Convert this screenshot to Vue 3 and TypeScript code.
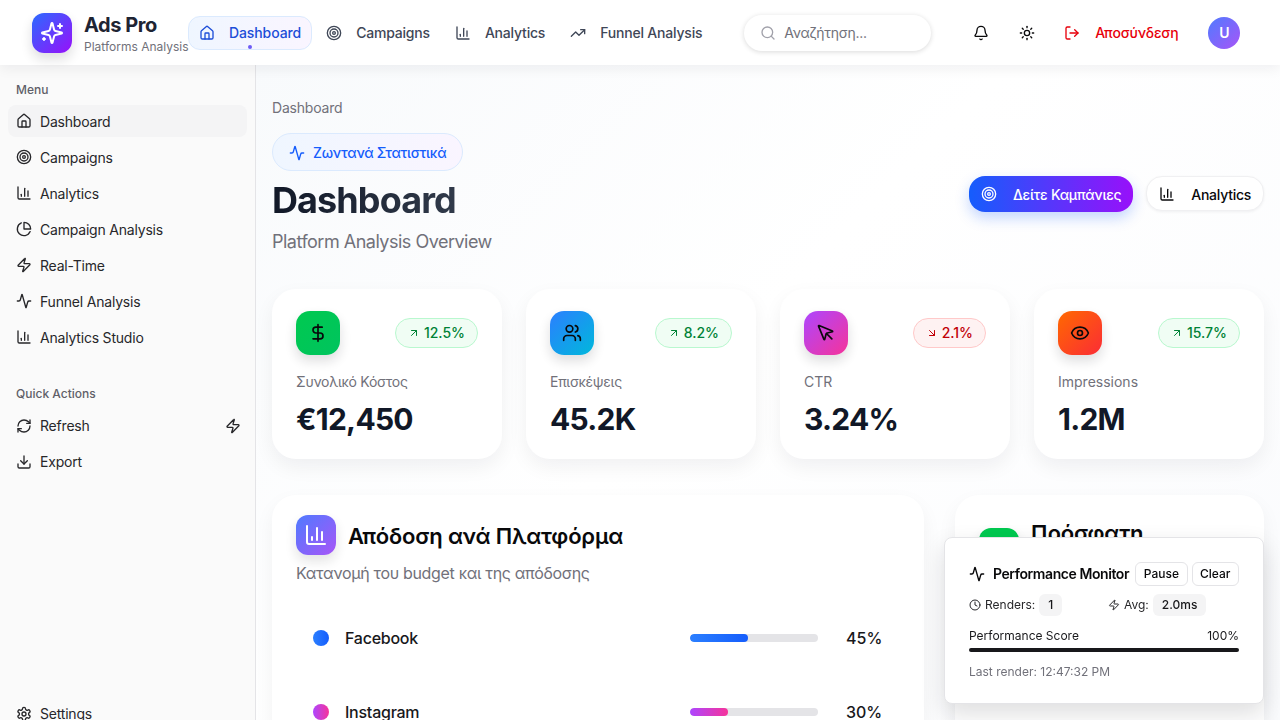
<script setup lang="ts">
const icons: Record<string, string> = {
  home: '<path d="M15 21v-8a1 1 0 0 0-1-1h-4a1 1 0 0 0-1 1v8"/><path d="M3 10a2 2 0 0 1 .709-1.528l7-5.999a2 2 0 0 1 2.582 0l7 5.999A2 2 0 0 1 21 10v9a2 2 0 0 1-2 2H5a2 2 0 0 1-2-2z"/>',
  target: '<circle cx="12" cy="12" r="10"/><circle cx="12" cy="12" r="6"/><circle cx="12" cy="12" r="2"/>',
  chart: '<path d="M3 3v16a2 2 0 0 0 2 2h16"/><path d="M18 17V9"/><path d="M13 17V5"/><path d="M8 17v-3"/>',
  pie: '<path d="M21.21 15.89A10 10 0 1 1 8 2.83"/><path d="M22 12A10 10 0 0 0 12 2v10z"/>',
  zap: '<path d="M4 14a1 1 0 0 1-.78-1.63l9.9-10.2a.5.5 0 0 1 .86.46l-1.92 6.02A1 1 0 0 0 13 10h7a1 1 0 0 1 .78 1.63l-9.9 10.2a.5.5 0 0 1-.86-.46l1.92-6.02A1 1 0 0 0 11 14z"/>',
  activity: '<path d="M22 12h-2.48a2 2 0 0 0-1.93 1.46l-2.35 8.36a.25.25 0 0 1-.48 0L9.24 2.18a.25.25 0 0 0-.48 0l-2.35 8.36A2 2 0 0 1 4.49 12H2"/>',
  refresh: '<path d="M3 12a9 9 0 0 1 9-9 9.75 9.75 0 0 1 6.74 2.74L21 8"/><path d="M21 3v5h-5"/><path d="M21 12a9 9 0 0 1-9 9 9.75 9.75 0 0 1-6.74-2.74L3 16"/><path d="M8 16H3v5"/>',
  download: '<path d="M21 15v4a2 2 0 0 1-2 2H5a2 2 0 0 1-2-2v-4"/><polyline points="7 10 12 15 17 10"/><line x1="12" y1="15" x2="12" y2="3"/>',
  settings: '<path d="M12.22 2h-.44a2 2 0 0 0-2 2v.18a2 2 0 0 1-1 1.73l-.43.25a2 2 0 0 1-2 0l-.15-.08a2 2 0 0 0-2.73.73l-.22.38a2 2 0 0 0 .73 2.73l.15.1a2 2 0 0 1 1 1.72v.51a2 2 0 0 1-1 1.74l-.15.09a2 2 0 0 0-.73 2.73l.22.38a2 2 0 0 0 2.73.73l.15-.08a2 2 0 0 1 2 0l.43.25a2 2 0 0 1 1 1.73V20a2 2 0 0 0 2 2h.44a2 2 0 0 0 2-2v-.18a2 2 0 0 1 1-1.73l.43-.25a2 2 0 0 1 2 0l.15.08a2 2 0 0 0 2.73-.73l.22-.39a2 2 0 0 0-.73-2.73l-.15-.08a2 2 0 0 1-1-1.74v-.5a2 2 0 0 1 1-1.74l.15-.09a2 2 0 0 0 .73-2.73l-.22-.38a2 2 0 0 0-2.73-.73l-.15.08a2 2 0 0 1-2 0l-.43-.25a2 2 0 0 1-1-1.73V4a2 2 0 0 0-2-2z"/><circle cx="12" cy="12" r="3"/>',
  sparkles: '<path d="M9.937 15.5A2 2 0 0 0 8.5 14.063l-6.135-1.582a.5.5 0 0 1 0-.962L8.5 9.936A2 2 0 0 0 9.937 8.5l1.582-6.135a.5.5 0 0 1 .963 0L14.063 8.5A2 2 0 0 0 15.5 9.937l6.135 1.581a.5.5 0 0 1 0 .964L15.5 14.063a2 2 0 0 0-1.437 1.437l-1.582 6.135a.5.5 0 0 1-.963 0z"/><path d="M20 3v4"/><path d="M22 5h-4"/><path d="M4 17v2"/><path d="M5 18H3"/>',
  trending: '<polyline points="22 7 13.5 15.5 8.5 10.5 2 17"/><polyline points="16 7 22 7 22 13"/>',
  search: '<circle cx="11" cy="11" r="8"/><path d="m21 21-4.3-4.3"/>',
  bell: '<path d="M10.268 21a2 2 0 0 0 3.464 0"/><path d="M3.262 15.326A1 1 0 0 0 4 17h16a1 1 0 0 0 .74-1.673C19.41 13.956 18 12.499 18 8A6 6 0 0 0 6 8c0 4.499-1.411 5.956-2.738 7.326"/>',
  sun: '<circle cx="12" cy="12" r="4"/><path d="M12 2v2"/><path d="M12 20v2"/><path d="m4.93 4.93 1.41 1.41"/><path d="m17.66 17.66 1.41 1.41"/><path d="M2 12h2"/><path d="M20 12h2"/><path d="m6.34 17.66-1.41 1.41"/><path d="m19.07 4.93-1.41 1.41"/>',
  logout: '<path d="M9 21H5a2 2 0 0 1-2-2V5a2 2 0 0 1 2-2h4"/><polyline points="16 17 21 12 16 7"/><line x1="21" y1="12" x2="9" y2="12"/>',
  dollar: '<line x1="12" y1="2" x2="12" y2="22"/><path d="M17 5H9.5a3.5 3.5 0 0 0 0 7h5a3.5 3.5 0 0 1 0 7H6"/>',
  users: '<path d="M16 21v-2a4 4 0 0 0-4-4H6a4 4 0 0 0-4 4v2"/><circle cx="9" cy="7" r="4"/><path d="M22 21v-2a4 4 0 0 0-3-3.87"/><path d="M16 3.13a4 4 0 0 1 0 7.75"/>',
  pointer: '<path d="M12.586 12.586 19 19"/><path d="M3.688 3.037a.497.497 0 0 0-.651.651l6.5 15.999a.501.501 0 0 0 .947-.062l1.569-6.083a2 2 0 0 1 1.448-1.479l6.124-1.579a.5.5 0 0 0 .063-.947z"/>',
  eye: '<path d="M2.062 12.348a1 1 0 0 1 0-.696 10.75 10.75 0 0 1 19.876 0 1 1 0 0 1 0 .696 10.75 10.75 0 0 1-19.876 0"/><circle cx="12" cy="12" r="3"/>',
  up: '<path d="M7 7h10v10"/><path d="M7 17 17 7"/>',
  down: '<path d="m7 7 10 10"/><path d="M17 7v10H7"/>',
  clock: '<circle cx="12" cy="12" r="10"/><polyline points="12 6 12 12 16 14"/>'
}

const topNav = [
  { label: 'Dashboard', icon: 'home', active: true },
  { label: 'Campaigns', icon: 'target', active: false },
  { label: 'Analytics', icon: 'chart', active: false },
  { label: 'Funnel Analysis', icon: 'trending', active: false }
]

const menu = [
  { label: 'Dashboard', icon: 'home', active: true },
  { label: 'Campaigns', icon: 'target', active: false },
  { label: 'Analytics', icon: 'chart', active: false },
  { label: 'Campaign Analysis', icon: 'pie', active: false },
  { label: 'Real-Time', icon: 'zap', active: false },
  { label: 'Funnel Analysis', icon: 'activity', active: false },
  { label: 'Analytics Studio', icon: 'chart', active: false }
]

const stats = [
  { label: 'Συνολικό Κόστος', value: '€12,450', change: '12.5%', up: true, icon: 'dollar', tone: 'green' },
  { label: 'Επισκέψεις', value: '45.2K', change: '8.2%', up: true, icon: 'users', tone: 'blue' },
  { label: 'CTR', value: '3.24%', change: '2.1%', up: false, icon: 'pointer', tone: 'pink' },
  { label: 'Impressions', value: '1.2M', change: '15.7%', up: true, icon: 'eye', tone: 'orange' }
]

const platforms = [
  { name: 'Facebook', share: 45, tone: 'fb' },
  { name: 'Instagram', share: 30, tone: 'ig' }
]
</script>

<template>
  <div class="app">
    <header class="topbar">
      <div class="brand">
        <div class="brand-icon">
          <svg class="ic ic-24" viewBox="0 0 24 24" v-html="icons.sparkles"></svg>
        </div>
        <div>
          <div class="brand-name">Ads Pro</div>
          <div class="brand-sub">Platforms Analysis</div>
        </div>
      </div>
      <nav class="top-nav">
        <a v-for="item in topNav" :key="item.label" class="top-link" :class="{ active: item.active }">
          <svg class="ic" viewBox="0 0 24 24" v-html="icons[item.icon]"></svg>
          {{ item.label }}
          <span v-if="item.active" class="top-dot"></span>
        </a>
      </nav>
      <div class="search">
        <svg class="ic" viewBox="0 0 24 24" v-html="icons.search"></svg>
        <span>Αναζήτηση...</span>
      </div>
      <button class="icon-btn bell">
        <svg class="ic" viewBox="0 0 24 24" v-html="icons.bell"></svg>
      </button>
      <button class="icon-btn theme">
        <svg class="ic" viewBox="0 0 24 24" v-html="icons.sun"></svg>
      </button>
      <button class="logout">
        <svg class="ic" viewBox="0 0 24 24" v-html="icons.logout"></svg>
        Αποσύνδεση
      </button>
      <div class="avatar">U</div>
    </header>

    <div class="body">
      <aside class="sidebar">
        <div class="side-label">Menu</div>
        <ul class="side-list menu">
          <li v-for="item in menu" :key="item.label" class="side-item" :class="{ active: item.active }">
            <svg class="ic" viewBox="0 0 24 24" v-html="icons[item.icon]"></svg>
            <span class="side-text">{{ item.label }}</span>
          </li>
        </ul>
        <div class="side-label quick">Quick Actions</div>
        <ul class="side-list">
          <li class="side-item">
            <svg class="ic" viewBox="0 0 24 24" v-html="icons.refresh"></svg>
            Refresh
            <svg class="ic side-zap" viewBox="0 0 24 24" v-html="icons.zap"></svg>
          </li>
          <li class="side-item">
            <svg class="ic" viewBox="0 0 24 24" v-html="icons.download"></svg>
            Export
          </li>
        </ul>
        <div class="side-foot">
          <div class="side-item">
            <svg class="ic" viewBox="0 0 24 24" v-html="icons.settings"></svg>
            Settings
          </div>
        </div>
      </aside>

      <main class="main">
        <div class="crumb">Dashboard</div>
        <div class="page-head">
          <div>
            <div class="live">
              <svg class="ic" viewBox="0 0 24 24" v-html="icons.activity"></svg>
              Ζωντανά Στατιστικά
            </div>
            <h1>Dashboard</h1>
            <p class="lead">Platform Analysis Overview</p>
          </div>
          <div class="head-actions">
            <button class="btn primary">
              <svg class="ic" viewBox="0 0 24 24" v-html="icons.target"></svg>
              Δείτε Καμπάνιες
            </button>
            <button class="btn plain">
              <svg class="ic" viewBox="0 0 24 24" v-html="icons.chart"></svg>
              Analytics
            </button>
          </div>
        </div>

        <section class="stats">
          <div v-for="s in stats" :key="s.label" class="stat">
            <div class="stat-top">
              <div class="stat-icon" :class="s.tone">
                <svg class="ic ic-20" viewBox="0 0 24 24" v-html="icons[s.icon]"></svg>
              </div>
              <div class="pill" :class="{ neg: !s.up }">
                <svg class="ic ic-12" viewBox="0 0 24 24" v-html="s.up ? icons.up : icons.down"></svg>
                {{ s.change }}
              </div>
            </div>
            <div class="stat-label">{{ s.label }}</div>
            <div class="stat-value">{{ s.value }}</div>
          </div>
        </section>

        <section class="panels">
          <div class="panel">
            <div class="panel-head">
              <div class="panel-icon violet">
                <svg class="ic ic-24" viewBox="0 0 24 24" v-html="icons.chart"></svg>
              </div>
              <h3>Απόδοση ανά Πλατφόρμα</h3>
            </div>
            <p class="panel-sub">Κατανομή του budget και της απόδοσης</p>
            <div class="rows">
              <div v-for="p in platforms" :key="p.name" class="row">
                <span class="dot" :class="p.tone"></span>
                <span class="row-name">{{ p.name }}</span>
                <span class="track">
                  <span class="fill" :class="p.tone" :style="{ width: p.share + '%' }"></span>
                </span>
                <span class="row-pct">{{ p.share }}%</span>
              </div>
            </div>
          </div>
          <div class="panel">
            <div class="panel-head">
              <div class="panel-icon green">
                <svg class="ic ic-24" viewBox="0 0 24 24" v-html="icons.activity"></svg>
              </div>
              <h3>Πρόσφατη Δραστηριότητα</h3>
            </div>
          </div>
        </section>
      </main>
    </div>

    <div class="monitor">
      <div class="mon-head">
        <svg class="ic" viewBox="0 0 24 24" v-html="icons.activity"></svg>
        <span class="mon-title">Performance Monitor</span>
        <button class="mon-btn">Pause</button>
        <button class="mon-btn">Clear</button>
      </div>
      <div class="mon-stats">
        <div class="mon-stat">
          <svg class="ic ic-12" viewBox="0 0 24 24" v-html="icons.clock"></svg>
          Renders:
          <span class="mon-chip">1</span>
        </div>
        <div class="mon-stat">
          <svg class="ic ic-12" viewBox="0 0 24 24" v-html="icons.zap"></svg>
          Avg:
          <span class="mon-chip">2.0ms</span>
        </div>
      </div>
      <div class="mon-score">
        <span>Performance Score</span>
        <span>100%</span>
      </div>
      <div class="mon-bar"></div>
      <div class="mon-last">Last render: 12:47:32 PM</div>
    </div>
  </div>
</template>

<style>
html,
body {
  margin: 0;
  height: 720px;
  overflow: hidden;
}
</style>

<style scoped>
.app {
  height: 720px;
  overflow: hidden;
  font-family: Inter, "Noto Sans", sans-serif;
  color: #09090b;
  font-size: 14px;
  line-height: 20px;
}

.ic {
  width: 16px;
  height: 16px;
  flex: none;
  fill: none;
  stroke: currentColor;
  stroke-width: 2;
  stroke-linecap: round;
  stroke-linejoin: round;
}

.ic-12 {
  width: 12px;
  height: 12px;
}

.ic-20 {
  width: 20px;
  height: 20px;
}

.ic-24 {
  width: 24px;
  height: 24px;
}

button {
  font: inherit;
  border: none;
  background: none;
  cursor: pointer;
  padding: 0;
}

.topbar {
  position: relative;
  z-index: 5;
  height: 65px;
  box-sizing: border-box;
  display: flex;
  align-items: center;
  padding-left: 32px;
  background: #fff;
  box-shadow: 0 4px 12px rgba(24, 24, 27, 0.06);
}

.brand {
  display: flex;
  align-items: center;
  gap: 12px;
  width: 156px;
  flex: none;
}

.brand-icon {
  width: 40px;
  height: 40px;
  flex: none;
  border-radius: 12px;
  display: flex;
  align-items: center;
  justify-content: center;
  color: #fff;
  background: linear-gradient(135deg, #2b6bff, #9810fa);
  box-shadow: 0 6px 12px rgba(24, 24, 27, 0.14);
}

.brand-name {
  font-size: 20px;
  line-height: 28px;
  font-weight: 700;
  letter-spacing: -0.45px;
  color: #1e2433;
  white-space: nowrap;
}

.brand-sub {
  font-size: 12px;
  line-height: 16px;
  color: #71717a;
  white-space: nowrap;
}

.top-nav {
  display: flex;
  gap: 3px;
}

.top-link {
  position: relative;
  display: flex;
  align-items: center;
  gap: 14px;
  height: 32px;
  padding: 0 10px;
  border: 1px solid transparent;
  border-radius: 12px;
  color: #3f4757;
  font-weight: 500;
  letter-spacing: -0.2px;
  white-space: nowrap;
}

.top-link.active {
  color: #1d4ed8;
  letter-spacing: -0.1px;
  background: linear-gradient(90deg, #eff6ff, #faf5ff);
  border-color: #dbeafe;
}

.top-dot {
  position: absolute;
  left: 59px;
  bottom: 0;
  width: 4px;
  height: 4px;
  border-radius: 50%;
  background: #6d5cf6;
}

.search {
  width: 187px;
  height: 36px;
  box-sizing: border-box;
  margin-left: 31px;
  padding: 0 16px;
  display: flex;
  align-items: center;
  gap: 8px;
  flex: none;
  border-radius: 18px;
  color: #71717a;
  letter-spacing: -0.27px;
  background: #fff;
  box-shadow: 0 1px 5px rgba(24, 24, 27, 0.16);
}

.search .ic {
  color: #a1a1aa;
}

.icon-btn {
  width: 32px;
  height: 32px;
  display: flex;
  align-items: center;
  justify-content: center;
  flex: none;
  color: #09090b;
}

.bell {
  margin-left: 34px;
}

.theme {
  margin-left: 14px;
}

.logout {
  display: flex;
  align-items: center;
  gap: 15px;
  margin-left: 21px;
  color: #e7000b;
  font-weight: 500;
  letter-spacing: -0.2px;
  white-space: nowrap;
}

.avatar {
  width: 32px;
  height: 32px;
  margin-left: 30px;
  flex: none;
  border-radius: 50%;
  display: flex;
  align-items: center;
  justify-content: center;
  color: #fff;
  font-weight: 600;
  background: linear-gradient(135deg, #4f7bff, #a855f7);
}

.body {
  display: flex;
  height: 655px;
}

.sidebar {
  width: 256px;
  height: 720px;
  flex: none;
  box-sizing: border-box;
  border-right: 1px solid #e4e4e7;
  background: #fafafa;
  padding: 17px 8px 0;
  display: flex;
  flex-direction: column;
  color: #27272a;
  letter-spacing: -0.2px;
}

.side-label {
  padding: 0 8px;
  font-size: 12px;
  line-height: 16px;
  font-weight: 500;
  letter-spacing: 0;
  color: #5f5f68;
  margin-bottom: 7px;
}

.side-label.quick {
  margin-top: 33px;
  margin-bottom: 8px;
}

.side-list {
  list-style: none;
  margin: 0;
  padding: 0;
  display: flex;
  flex-direction: column;
  gap: 4px;
}

.side-item {
  height: 32px;
  display: flex;
  align-items: center;
  gap: 8px;
  padding: 0 8px;
  border-radius: 8px;
}

.side-item.active {
  background: #f4f4f5;
}

.menu .side-text {
  padding-top: 2px;
}

.side-zap {
  margin-left: auto;
  margin-right: -2px;
}

.side-foot {
  margin-top: 220px;
}

.main {
  flex: 1;
  min-width: 0;
  box-sizing: border-box;
  padding: 33px 16px 0;
  overflow: hidden;
  background: linear-gradient(135deg, #f8fafc 0%, #ffffff 45%, #fafbfd 100%);
}

.crumb {
  color: #71717a;
  letter-spacing: -0.2px;
}

.page-head {
  margin-top: 15px;
  display: flex;
  align-items: center;
  justify-content: space-between;
}

.live {
  display: inline-flex;
  align-items: center;
  gap: 8px;
  height: 38px;
  box-sizing: border-box;
  padding: 2px 16px 0;
  border: 1px solid #dbeafe;
  border-radius: 19px;
  color: #155dfc;
  font-weight: 500;
  letter-spacing: -0.28px;
  background: linear-gradient(90deg, #eff6ff, #faf5ff);
}

h1 {
  margin: 9px 0 0;
  font-size: 36px;
  line-height: 40px;
  font-weight: 700;
  letter-spacing: -0.9px;
  color: transparent;
  background: linear-gradient(90deg, #111827, #374151);
  -webkit-background-clip: text;
  background-clip: text;
}

.lead {
  margin: 8px 0 0;
  font-size: 18px;
  line-height: 28px;
  letter-spacing: -0.5px;
  color: #71717a;
}

.head-actions {
  display: flex;
  align-items: center;
  gap: 13px;
  margin-bottom: 2px;
}

.btn {
  display: flex;
  align-items: center;
  gap: 16px;
  border-radius: 16px;
  font-weight: 500;
  letter-spacing: -0.27px;
  white-space: nowrap;
}

.btn .ic {
  margin-top: -2px;
}

.btn.primary {
  height: 36px;
  padding: 2px 12px 0;
  color: #fff;
  background: linear-gradient(90deg, #155dfc, #9810fa);
  box-shadow: 0 6px 14px rgba(21, 93, 252, 0.25);
}

.btn.plain {
  height: 35px;
  padding: 2px 12px 0;
  border: 1px solid #f0f0f2;
  background: #fff;
  color: #09090b;
  box-shadow: 0 1px 3px rgba(24, 24, 27, 0.06);
}

.stats {
  margin-top: 33px;
  display: grid;
  grid-template-columns: repeat(4, 1fr);
  gap: 24px;
}

.stat {
  height: 170px;
  box-sizing: border-box;
  padding: 22px 24px;
  border-radius: 24px;
  background: #fff;
  box-shadow: 0 8px 20px rgba(24, 24, 27, 0.06);
}

.stat-top {
  display: flex;
  align-items: center;
  justify-content: space-between;
}

.stat-icon {
  width: 44px;
  height: 44px;
  border-radius: 14px;
  display: flex;
  align-items: center;
  justify-content: center;
  color: #09090b;
  box-shadow: 0 6px 12px rgba(24, 24, 27, 0.14);
}

.stat-icon.green {
  background: linear-gradient(135deg, #00c950, #00c45e);
}

.stat-icon.blue {
  background: linear-gradient(135deg, #2b7fff, #00b8db);
}

.stat-icon.pink {
  background: linear-gradient(135deg, #ad46ff, #f6339a);
}

.stat-icon.orange {
  background: linear-gradient(135deg, #ff6900, #fb2c36);
}

.pill {
  display: flex;
  align-items: center;
  gap: 4px;
  height: 30px;
  box-sizing: border-box;
  padding: 0 12px;
  border: 1px solid #b9f8cf;
  border-radius: 15px;
  background: #f0fdf4;
  color: #008236;
  font-weight: 500;
}

.pill.neg {
  border-color: #ffc9c9;
  background: #fef2f2;
  color: #c10007;
}

.stat-label {
  margin-top: 17px;
  color: #71717a;
}

.stat:nth-child(-n + 2) .stat-label {
  letter-spacing: -0.27px;
}

.stat-value {
  margin-top: 7px;
  font-size: 30px;
  line-height: 40px;
  font-weight: 700;
  letter-spacing: -0.75px;
  color: #111827;
}

.panels {
  margin-top: 36px;
  display: grid;
  grid-template-columns: 652px 309px;
  gap: 31px;
}

.panel {
  height: 400px;
  box-sizing: border-box;
  padding: 20px 24px;
  border-radius: 24px;
  background: #fff;
  box-shadow: 0 8px 20px rgba(24, 24, 27, 0.05);
}

.panel-head {
  display: flex;
  align-items: center;
  gap: 12px;
}

.panel-icon {
  width: 40px;
  height: 40px;
  flex: none;
  border-radius: 12px;
  display: flex;
  align-items: center;
  justify-content: center;
  color: #fff;
  box-shadow: 0 6px 12px rgba(24, 24, 27, 0.12);
}

.panel-icon.violet {
  background: linear-gradient(135deg, #4f7bff, #a855f7);
}

.panel-icon.green {
  background: #00c950;
}

h3 {
  margin: 0;
  padding-top: 2px;
  font-size: 22px;
  line-height: 32px;
  font-weight: 600;
  letter-spacing: -0.18px;
  color: #09090b;
}

.panel-sub {
  margin: 6px 0 0;
  font-size: 16px;
  line-height: 24px;
  letter-spacing: -0.33px;
  color: #71717a;
}

.rows {
  margin-top: 24px;
  display: flex;
  flex-direction: column;
  gap: 16px;
}

.row {
  height: 58px;
  box-sizing: border-box;
  padding: 0 18px 0 17px;
  display: flex;
  align-items: center;
  gap: 16px;
  font-size: 16px;
  font-weight: 500;
}

.dot {
  width: 16px;
  height: 16px;
  flex: none;
  border-radius: 50%;
}

.fb {
  background: linear-gradient(90deg, #2b7fff, #155dfc);
}

.ig {
  background: linear-gradient(90deg, #ad46ff, #f6339a);
}

.row-name {
  flex: 1;
  letter-spacing: -0.25px;
  color: #18181b;
}

.track {
  width: 128px;
  height: 8px;
  border-radius: 4px;
  background: #e4e4e7;
  overflow: hidden;
  margin-right: 12px;
}

.fill {
  display: block;
  height: 100%;
  border-radius: 4px;
}

.row-pct {
  width: 36px;
  text-align: right;
  color: #18181b;
}

.monitor {
  position: fixed;
  right: 16px;
  bottom: 16px;
  z-index: 10;
  width: 320px;
  height: 167px;
  box-sizing: border-box;
  padding: 24px;
  border: 1px solid #e4e4e7;
  border-radius: 8px;
  background: #fff;
  box-shadow: 0 10px 24px rgba(24, 24, 27, 0.14);
  font-size: 12px;
  line-height: 16px;
}

.mon-head {
  display: flex;
  align-items: center;
  height: 24px;
}

.mon-title {
  margin-left: 8px;
  font-size: 14px;
  font-weight: 600;
  letter-spacing: -0.42px;
  white-space: nowrap;
  flex: 1;
}

.mon-btn {
  height: 24px;
  padding: 0 7.5px;
  margin-left: 4px;
  border: 1px solid #e4e4e7;
  border-radius: 6px;
  background: #fff;
  font-size: 12px;
  font-weight: 500;
  color: #09090b;
}

.mon-stats {
  margin-top: 8px;
  display: grid;
  grid-template-columns: repeat(2, 1fr);
  gap: 8px;
}

.mon-stat {
  display: flex;
  align-items: center;
  gap: 4px;
  color: #27272a;
}

.mon-chip {
  height: 22px;
  padding: 0 9px;
  border-radius: 6px;
  display: flex;
  align-items: center;
  background: #f4f4f5;
  color: #18181b;
  font-weight: 500;
}

.mon-score {
  margin-top: 12px;
  display: flex;
  justify-content: space-between;
  color: #18181b;
}

.mon-bar {
  margin-top: 4px;
  height: 4px;
  border-radius: 2px;
  background: #18181b;
}

.mon-last {
  margin-top: 12px;
  color: #71717a;
}
</style>
